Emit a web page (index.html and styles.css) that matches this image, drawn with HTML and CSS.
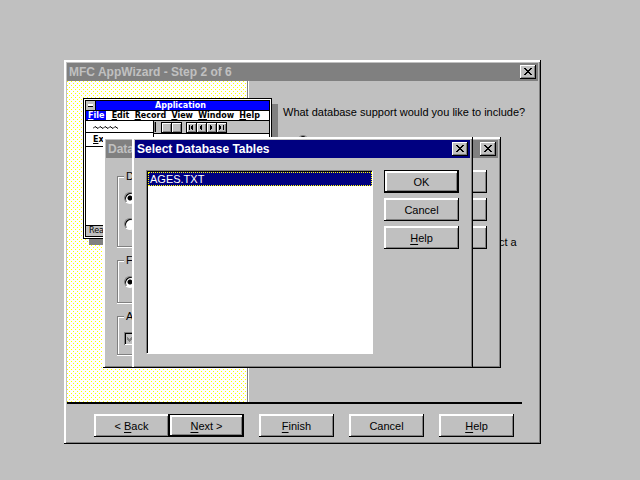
FILE: index.html
```html
<!DOCTYPE html>
<html lang="en">
<head>
<meta charset="utf-8">
<title>MFC AppWizard</title>
<link rel="stylesheet" href="styles.css">
</head>
<body>
<main class="desktop">
  <section class="window wizard">
    <header class="titlebar"><h1>MFC AppWizard - Step 2 of 6</h1>
      <button class="close" aria-label="Close"><svg width="8" height="7" viewBox="0 0 8 7" shape-rendering="crispEdges"><path d="M0 0h2v1h1v1h2V1h1V0h2v1H7v1H6v1H5v1h1v1h1v1h1v1H6V6H5V5H3v1H2v1H0V6h1V5h1V4h1V3H2V2H1V1H0z"/></svg></button></header>
    <div class="wizard-body">
      <div class="picture">
        <div class="app">
          <div class="app-frame">
            <div class="app-title"><span class="sysbox"></span><span class="app-name">Application</span></div>
            <div class="app-menu"><span class="active"><u>F</u>ile</span><span><u>E</u>dit</span><span><u>R</u>ecord</span><span><u>V</u>iew</span><span><u>W</u>indow</span><span><u>H</u>elp</span></div>
            <div class="app-content">
              <div class="app-drop">
                <div class="squiggle"><svg width="26" height="3" viewBox="0 0 26 3"><path d="M0 2.5L2 .5 5 2.500 7 .5 10 2.500 12 .5 15 2.500 17 .5 20 2.500 22 .5 25 2.500" fill="none" stroke="#000"/></svg></div>
                <div class="exit"><u>E</u>x</div>
              </div>
              <div class="app-tools">
                <i class="stub"></i><i class="tool gap"></i><i class="tool"></i>
                <i class="tool gap"><svg width="7" height="7" viewBox="0 0 7 7" shape-rendering="crispEdges"><path d="M1 1h1v5H1zM5 1v5H4V5H3V2h1V1z"/></svg></i>
                <i class="tool"><svg width="7" height="7" viewBox="0 0 7 7" shape-rendering="crispEdges"><path d="M4 1v5H3V5H2V2h1V1z"/></svg></i>
                <i class="tool"><svg width="7" height="7" viewBox="0 0 7 7" shape-rendering="crispEdges"><path d="M2 1h1v1h1v3H3v1H2z"/></svg></i>
                <i class="tool"><svg width="7" height="7" viewBox="0 0 7 7" shape-rendering="crispEdges"><path d="M5 1h1v5H5zM1 1h1v1h1v3H2v1H1z"/></svg></i>
              </div>
            </div>
            <div class="app-status">Rea</div>
          </div>
        </div>
      </div>
      <div class="question">
        <p>What database support would you like to include?</p>
        <input type="radio" class="radio" aria-label="Database support">
        <p class="note">ct a</p>
      </div>
    </div>
    <footer class="wizard-nav">
      <div class="pair"><button class="btn"><span>&lt; <u>B</u>ack</span></button><button class="btn default"><span><u>N</u>ext &gt;</span></button></div>
      <button class="btn"><span><u>F</u>inish</span></button>
      <button class="btn">Cancel</button>
      <button class="btn"><span><u>H</u>elp</span></button>
    </footer>
  </section>

  <section class="window source">
    <header class="titlebar"><h2>Data</h2>
      <button class="close" aria-label="Close"><svg width="8" height="7" viewBox="0 0 8 7" shape-rendering="crispEdges"><path d="M0 0h2v1h1v1h2V1h1V0h2v1H7v1H6v1H5v1h1v1h1v1h1v1H6V6H5V5H3v1H2v1H0V6h1V5h1V4h1V3H2V2H1V1H0z"/></svg></button></header>
    <div class="source-body">
      <div class="groups">
        <fieldset class="group tall"><legend>D</legend>
          <input type="radio" name="d" class="radio" aria-label="D, first" checked>
          <input type="radio" name="d" class="radio" aria-label="D, second"></fieldset>
        <fieldset class="group"><legend>F</legend>
          <input type="radio" name="f" class="radio" aria-label="F" checked></fieldset>
        <fieldset class="group last"><legend>A</legend>
          <label class="check"><input type="checkbox" aria-label="A" checked disabled><svg width="9" height="8" viewBox="0 0 9 8" shape-rendering="crispEdges"><path d="M1 2h1v1h1v1h1V3h1V2h1V1h1V0h1v3H7v1H6v1H5v1H4v1H3V6H2V5H1z" fill="#808080"/></svg></label></fieldset>
      </div>
      <div class="actions"><button class="btn" aria-label="OK"></button><button class="btn" aria-label="Cancel"></button><button class="btn" aria-label="Help"></button></div>
    </div>
  </section>

  <section class="window tables">
    <header class="titlebar current"><h2>Select Database Tables</h2>
      <button class="close" aria-label="Close"><svg width="8" height="7" viewBox="0 0 8 7" shape-rendering="crispEdges"><path d="M0 0h2v1h1v1h2V1h1V0h2v1H7v1H6v1H5v1h1v1h1v1h1v1H6V6H5V5H3v1H2v1H0V6h1V5h1V4h1V3H2V2H1V1H0z"/></svg></button></header>
    <div class="tables-body">
      <ul class="list" role="listbox" aria-label="Tables"><li role="option" aria-selected="true">AGES.TXT</li></ul>
      <div class="actions"><button class="btn default">OK</button><button class="btn">Cancel</button><button class="btn"><span><u>H</u>elp</span></button></div>
    </div>
  </section>
</main>
</body>
</html>
```
FILE: styles.css
```css
* { box-sizing: border-box; }

body {
  margin: 0;
  background: #c0c0c0;
  color: #000;
  font: 11px/14px "Liberation Sans", Arial, sans-serif;
}

h1, h2, p, ul { margin: 0; padding: 0; }
button, input { font: inherit; color: inherit; margin: 0; }
u { text-underline-offset: 2px; text-decoration-thickness: 1px; }

.desktop { position: relative; min-height: 100vh; overflow: hidden; }

/* Windows */
.window {
  position: absolute;
  display: flex;
  flex-direction: column;
  padding: 3px;
  background: #c0c0c0;
  box-shadow: inset -1px -1px #000, inset 2px 2px #fff, inset -2px -2px #808080;
}
.wizard { left: 64px; top: 60px; width: 477px; height: 384px; }
.source { left: 103px; top: 137px; width: 398px; height: 231px; }
.tables { left: 132px; top: 137px; width: 341px; height: 231px; }

.titlebar {
  display: flex;
  align-items: center;
  justify-content: space-between;
  height: 18px;
  flex: none;
  padding: 0 2px;
  background: #808080;
  color: #c0c0c0;
}
.titlebar h1, .titlebar h2 { font-size: 12px; line-height: 18px; font-weight: bold; }
.current { background: #000080; color: #fff; }
.close {
  display: flex;
  align-items: center;
  justify-content: center;
  width: 16px;
  height: 14px;
  padding: 0 1px 1px 0;
  border: 0;
  background: #c0c0c0;
  box-shadow: inset -1px -1px #000, inset 1px 1px #fff, inset -2px -2px #808080;
}

/* Buttons */
.btn {
  display: flex;
  align-items: center;
  justify-content: center;
  width: 75px;
  height: 23px;
  flex: none;
  padding: 0;
  border: 0;
  background: #c0c0c0;
  box-shadow: inset -1px -1px #000, inset 2px 2px #fff, inset -2px -2px #808080;
}
.btn.default {
  box-shadow: inset 1px 1px #000, inset -2px -2px #000, inset 3px 3px #fff, inset -3px -3px #808080;
}
.actions { display: flex; flex-direction: column; gap: 5px; }

/* Wizard */
.wizard-body {
  display: flex;
  flex: 1;
  margin-right: 16px;
  border-bottom: 2px solid #000;
}
.picture {
  width: 181px;
  padding: 17px 0 0 16px;
  border-right: 1px solid #808080;
  background:
    conic-gradient(from 0deg at 1px 1px, transparent 75%, #ff0 0) 0 0 / 4px 4px,
    conic-gradient(from 0deg at 1px 1px, transparent 75%, #ff0 0) 2px 2px / 4px 4px,
    #fff;
}
.question { flex: 1; padding: 24px 0 0 34px; border-left: 1px solid #fff; white-space: nowrap; }
.question .radio { display: block; margin: 16px 0 0 14px; border-color: #808080; }
.question .note { padding: 88px 0 0 216px; }
.wizard-nav {
  display: flex;
  gap: 15px;
  padding: 10px 0 4px 27px;
}
.pair { display: flex; }

/* Application picture */
.app {
  position: relative;
  width: 189px;
  height: 141px;
  padding: 1px;
  border: 1px solid #000;
  background: #fff;
  box-shadow: 6px 6px #808080;
  font: bold 8px/9px "DejaVu Sans", sans-serif;
}
.app-frame { display: flex; flex-direction: column; height: 100%; border: 1px solid #000; }
.app-title { display: flex; flex: none; height: 10px; background: #00f; color: #fff; border-bottom: 1px solid #000; }
.sysbox { display: flex; align-items: center; justify-content: center; width: 10px; background: #c0c0c0; border-right: 1px solid #000; }
.sysbox::before { content: ""; width: 5px; height: 2px; background: #fff; border-bottom: 1px solid #000; }
.app-name { flex: 1; padding-right: 4px; text-align: center; }
.app-menu { display: flex; justify-content: space-between; flex: none; height: 10px; padding-right: 9px; border-bottom: 1px solid #000; }
.app-menu u, .exit u { text-underline-offset: 1px; }
.app-menu .active { padding: 0 2px; background: #00f; color: #fff; }
.app-content { display: flex; align-items: flex-start; flex: 1; }
.app-drop { width: 68px; border-right: 1px solid #000; }
.squiggle { height: 12px; padding: 5px 0 0 7px; border-bottom: 1px solid #000; }
.squiggle svg { display: block; }
.exit { height: 14px; padding: 2px 7px; border-bottom: 1px solid #000; }
.app-tools { display: flex; align-items: center; flex: 1; height: 13px; background: #c0c0c0; border-bottom: 1px solid #000; }
.stub { width: 2px; height: 10px; background: #808080; border-right: 1px solid #000; }
.tool { display: flex; align-items: center; justify-content: center; width: 11px; height: 11px; margin-right: -1px; border: 1px solid #000; box-shadow: inset 1px 1px #fff, inset -1px -1px #808080; }
.tool.gap { margin-left: 5px; }
.app-status { flex: none; height: 11px; padding-left: 3px; background: #c0c0c0; border-top: 1px solid #000; font-weight: normal; }

/* Data source dialog */
.source-body { display: flex; justify-content: space-between; padding: 12px 11px 0; }
.groups { width: 200px; }
.group {
  height: 49px;
  margin: 0 0 7px;
  padding: 0 6px;
  border: 1px solid #808080;
  box-shadow: inset 1px 1px #fff, 0 1px #fff;
}
.group.tall { height: 77px; }
.group.last { height: 45px; margin-bottom: 0; }
.group legend { height: 12px; margin: 0; padding: 0 2px; line-height: 12px; background: #c0c0c0; }
.group .radio { display: block; margin: 10px 0 14px; }
.radio {
  appearance: none;
  width: 12px;
  height: 12px;
  border: 1px solid;
  border-color: #808080 #fff #fff #808080;
  border-radius: 50%;
  background: #fff;
  box-shadow: inset 1px 1px #000;
}
.radio:checked { background: radial-gradient(circle at 5px 5px, #000 2px, #fff 3px); }
.check { display: grid; width: 13px; height: 13px; margin-top: 10px; }
.check input, .check svg { grid-area: 1 / 1; place-self: center; }
.check input {
  appearance: none;
  width: 13px;
  height: 13px;
  background: #c0c0c0;
  box-shadow: inset 1px 1px #808080, inset -1px -1px #fff, inset 2px 2px #000;
}
.check svg { position: relative; }

/* Table selection dialog */
.tables-body { display: flex; justify-content: space-between; gap: 11px; padding: 12px 11px 11px; flex: 1; }
.list {
  flex: 1;
  list-style: none;
  background: #fff;
  border: 1px solid;
  border-color: #808080 #fff #fff #808080;
  box-shadow: inset 1px 1px #000;
  padding: 1px 0 0 1px;
}
.list li { height: 14px; padding: 0 1px; line-height: 12px; border: 1px dotted #ff0; background: #000080; color: #fff; }
```
